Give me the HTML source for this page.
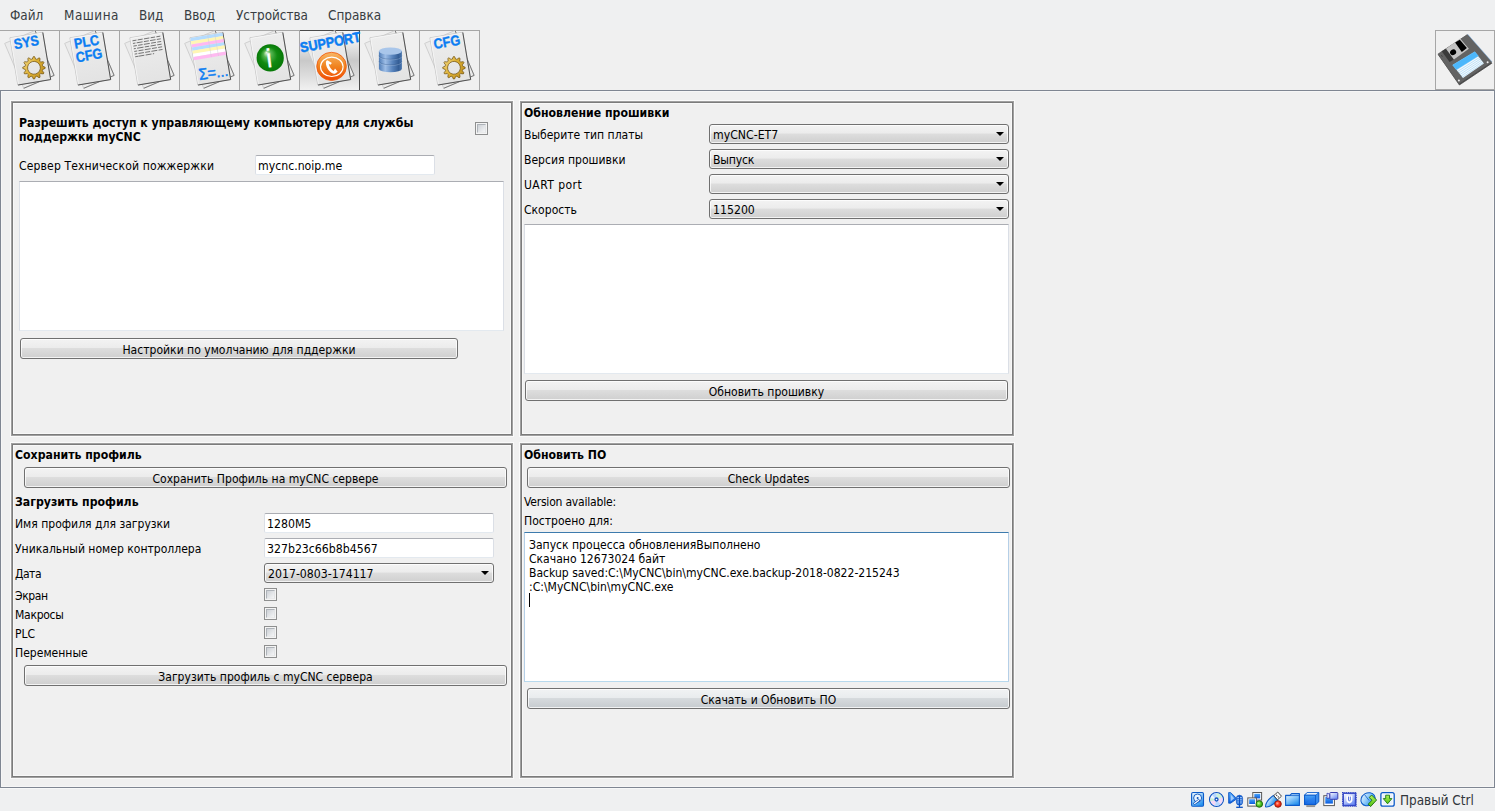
<!DOCTYPE html>
<html lang="ru">
<head>
<meta charset="utf-8">
<title>myCNC</title>
<style>
html,body{margin:0;padding:0;}
body{width:1495px;height:811px;overflow:hidden;background:#eff0f1;position:relative;
 font-family:"DejaVu Sans Condensed","DejaVu Sans","Liberation Sans",sans-serif;font-size:12.2px;color:#000;}
.abs{position:absolute;}
#menubar{position:absolute;left:0;top:0;width:1495px;height:30px;background:#eff0f1;}
#menubar span{position:absolute;top:7px;font-size:13.4px;line-height:18px;color:#383d42;white-space:nowrap;}
#vm{position:absolute;left:0;top:30px;width:1495px;height:758px;background:#f0f0f0;}
#frame{position:absolute;left:0;top:60px;width:1493px;height:696px;border:1px solid #7f8692;box-shadow:inset 1px 1px 0 #f6f6f6,inset -1px -1px 0 #f6f6f6;}
.tb{position:absolute;top:0;width:59px;height:60px;border-top:1px solid #a6a6a6;border-right:1px solid #a6a6a6;box-sizing:border-box;width:60px;}
.tb svg{position:absolute;left:0;top:-1px;}
.tb.sel{border-top:1px solid #4a4a4a;border-right:1px solid #4a4a4a;
 background:linear-gradient(#f6f6f6 0%,#eeeeee 18%,#c9c9c9 50%,#dcdcdc 75%,#f1f1f1 100%);}

.panel{position:absolute;border:1px solid #7c7c7c;box-sizing:border-box;box-shadow:0 0 0 1px #a0a0a0,0 0 0 2px #fafafa,inset 0 0 0 1px #f8f8f8;}
.t{position:absolute;white-space:nowrap;line-height:14px;height:14px;font-size:12.05px;}
.b{font-weight:bold;font-size:12.2px;}
.btn{position:absolute;box-sizing:border-box;font-size:12.05px;border:1px solid #707070;border-radius:3px;height:21px;
 background:linear-gradient(#f3f3f3 0%,#ececec 45%,#dddddd 50%,#cfcfcf 100%);
 box-shadow:inset 0 0 0 1px rgba(255,255,255,.75);text-align:center;line-height:22px;white-space:nowrap;}
.cmb{position:absolute;box-sizing:border-box;border:1px solid #707070;border-radius:3px;height:20px;
 background:linear-gradient(#f3f3f3 0%,#ececec 45%,#dddddd 50%,#cfcfcf 100%);
 box-shadow:inset 0 0 0 1px rgba(255,255,255,.75);line-height:20px;padding-left:3px;white-space:nowrap;}
.cmb:after{content:"";position:absolute;right:4px;top:7px;border-left:4px solid transparent;border-right:4px solid transparent;border-top:4px solid #000;}
.inp{position:absolute;box-sizing:border-box;border:1px solid #dbdfe6;border-top-color:#abadb3;border-bottom-color:#e3e9ef;border-radius:2px;background:#fff;height:20px;line-height:21px;padding-left:2px;white-space:nowrap;}
.ta{position:absolute;box-sizing:border-box;border:1px solid #dbdfe6;border-top-color:#abadb3;border-bottom-color:#e3e9ef;background:#fff;}
.cb{position:absolute;box-sizing:border-box;width:13px;height:13px;border:1px solid #8e8f8f;background:#f4f4f4;}
.cb:after{content:"";position:absolute;left:1px;top:1px;width:9px;height:9px;box-sizing:border-box;border:1px solid;border-color:#aeb3b9 #e2e4e6 #e9eaeb #aeb3b9;background:linear-gradient(135deg,#cdd1d6,#f4f5f6);}
#status{position:absolute;left:0;top:788px;width:1495px;height:23px;background:#eff0f1;border-top:1px solid #f7f8f8;box-sizing:border-box;}
</style>
</head>
<body>
<div id="menubar">
<span style="left:10px">Файл</span><span style="left:64px;letter-spacing:.5px">Машина</span><span style="left:139px">Вид</span><span style="left:184px">Ввод</span><span style="left:236px">Устройства</span><span style="left:328px">Справка</span>
</div>
<div id="vm">
<svg width="0" height="0" style="position:absolute"><defs>
<linearGradient id="pg" x1="0" y1="0" x2="0" y2="1"><stop offset="0" stop-color="#ededed"/><stop offset="1" stop-color="#e3e3e3"/></linearGradient>
<linearGradient id="gold" x1="0" y1="0" x2="1" y2="1"><stop offset="0" stop-color="#f7e096"/><stop offset=".45" stop-color="#ddb033"/><stop offset="1" stop-color="#b98a1e"/></linearGradient>
<radialGradient id="grn" cx=".5" cy=".5" r=".5" fx=".36" fy=".3"><stop offset="0" stop-color="#e6f7e2"/><stop offset=".28" stop-color="#55b34f"/><stop offset=".62" stop-color="#118a11"/><stop offset="1" stop-color="#077807"/></radialGradient>
<linearGradient id="org" x1="0" y1="0" x2="0" y2="1"><stop offset="0" stop-color="#f8b766"/><stop offset=".5" stop-color="#f0831f"/><stop offset="1" stop-color="#f04a02"/></linearGradient>
<linearGradient id="dbg" x1="0" y1="0" x2="1" y2="0"><stop offset="0" stop-color="#4f7cb6"/><stop offset=".28" stop-color="#9dbde6"/><stop offset=".6" stop-color="#5783bc"/><stop offset=".85" stop-color="#355f97"/><stop offset="1" stop-color="#4a76ae"/></linearGradient>
</defs></svg>
<div class="tb" style="left:0px"><svg width="60" height="60" viewBox="0 0 60 60" overflow="visible"><g transform="translate(29.4 29.4) rotate(-23)"><rect x="-16.5" y="-24.4" width="33" height="48.8" fill="#ebebeb" stroke="#c6c6c6" stroke-width=".7"/><path d="M16.5 -24.4V24.4H-16.5" fill="none" stroke="#6e6e6e" stroke-width=".8"/></g>
<g transform="translate(30.3 28.7) rotate(-9.5)"><rect x="-16.65" y="-23.95" width="33.3" height="47.9" fill="url(#pg)" stroke="#bcbcbc" stroke-width=".7"/><path d="M-15.95 23.5V-23.25H16.1" fill="none" stroke="#f8f8f8" stroke-width=".8"/><path d="M16.65 -23.8V23.95H-16.4" fill="none" stroke="#4c4c4c" stroke-width=".9"/></g><text transform="translate(14.8 19.2) rotate(-10) scale(0.97 1.1)" font-family="Liberation Sans, sans-serif" font-size="13" font-weight="bold" fill="#0b7df2" stroke="#0b7df2" stroke-width=".35">SYS</text><g transform="translate(33.95 37.8) rotate(-15)"><path d="M8.90 0.00 L8.88 0.65 L10.96 2.33 L10.65 3.46 L8.01 3.87 L7.71 4.45 L7.36 5.00 L8.32 7.49 L7.49 8.32 L5.00 7.36 L4.45 7.71 L3.87 8.01 L3.46 10.65 L2.33 10.96 L0.65 8.88 L0.00 8.90 L-0.65 8.88 L-2.33 10.96 L-3.46 10.65 L-3.87 8.01 L-4.45 7.71 L-5.00 7.36 L-7.49 8.32 L-8.32 7.49 L-7.36 5.00 L-7.71 4.45 L-8.01 3.87 L-10.65 3.46 L-10.96 2.33 L-8.88 0.65 L-8.90 0.00 L-8.88 -0.65 L-10.96 -2.33 L-10.65 -3.46 L-8.01 -3.87 L-7.71 -4.45 L-7.36 -5.00 L-8.32 -7.49 L-7.49 -8.32 L-5.00 -7.36 L-4.45 -7.71 L-3.87 -8.01 L-3.46 -10.65 L-2.33 -10.96 L-0.65 -8.88 L-0.00 -8.90 L0.65 -8.88 L2.33 -10.96 L3.46 -10.65 L3.87 -8.01 L4.45 -7.71 L5.00 -7.36 L7.49 -8.32 L8.32 -7.49 L7.36 -5.00 L7.71 -4.45 L8.01 -3.87 L10.65 -3.46 L10.96 -2.33 L8.88 -0.65Z M6.4 0A6.4 6.4 0 1 0 -6.4 0A6.4 6.4 0 1 0 6.4 0Z" fill="url(#gold)" fill-rule="evenodd" stroke="#6e4f0e" stroke-width=".65" stroke-linejoin="round"/></g></svg></div>
<div class="tb" style="left:60px"><svg width="60" height="60" viewBox="0 0 60 60" overflow="visible"><g transform="translate(29.4 29.4) rotate(-23)"><rect x="-16.5" y="-24.4" width="33" height="48.8" fill="#ebebeb" stroke="#c6c6c6" stroke-width=".7"/><path d="M16.5 -24.4V24.4H-16.5" fill="none" stroke="#6e6e6e" stroke-width=".8"/></g>
<g transform="translate(30.3 28.7) rotate(-9.5)"><rect x="-16.65" y="-23.95" width="33.3" height="47.9" fill="url(#pg)" stroke="#bcbcbc" stroke-width=".7"/><path d="M-15.95 23.5V-23.25H16.1" fill="none" stroke="#f8f8f8" stroke-width=".8"/><path d="M16.65 -23.8V23.95H-16.4" fill="none" stroke="#4c4c4c" stroke-width=".9"/></g><text transform="translate(15.0 18.7) rotate(-10) scale(0.97 1.1)" font-family="Liberation Sans, sans-serif" font-size="13" font-weight="bold" fill="#0b7df2" stroke="#0b7df2" stroke-width=".35">PLC</text><text transform="translate(16.8 32.4) rotate(-10) scale(0.97 1.1)" font-family="Liberation Sans, sans-serif" font-size="13" font-weight="bold" fill="#0b7df2" stroke="#0b7df2" stroke-width=".35">CFG</text></svg></div>
<div class="tb" style="left:120px"><svg width="60" height="60" viewBox="0 0 60 60" overflow="visible"><g transform="translate(29.4 29.4) rotate(-23)"><rect x="-16.5" y="-24.4" width="33" height="48.8" fill="#ebebeb" stroke="#c6c6c6" stroke-width=".7"/><path d="M16.5 -24.4V24.4H-16.5" fill="none" stroke="#6e6e6e" stroke-width=".8"/></g>
<g transform="translate(30.3 28.7) rotate(-9.5)"><rect x="-16.65" y="-23.95" width="33.3" height="47.9" fill="url(#pg)" stroke="#bcbcbc" stroke-width=".7"/><path d="M-15.95 23.5V-23.25H16.1" fill="none" stroke="#f8f8f8" stroke-width=".8"/><path d="M16.65 -23.8V23.95H-16.4" fill="none" stroke="#4c4c4c" stroke-width=".9"/><path d="M-14.6 -20.60H13.6" stroke="#4a4a4a" stroke-width=".7" stroke-dasharray="4 1.3 5 1.3 5.5 1.3 4.5 1.3 5" fill="none"/><path d="M-14.6 -17.90H13.6" stroke="#4a4a4a" stroke-width=".7" stroke-dasharray="2.5 1.3 6 1.3 5 1.3 5.5 1.3 5" fill="none"/><path d="M-14.6 -15.20H13.6" stroke="#4a4a4a" stroke-width=".7" stroke-dasharray="3.5 1.3 4.5 1.3 6 1.3 5 1.3 5" fill="none"/><path d="M-14.6 -12.50H13.6" stroke="#4a4a4a" stroke-width=".7" stroke-dasharray="2 1.3 6.5 1.3 4.5 1.3 5.5 1.3 6" fill="none"/><path d="M-14.6 -9.80H13.6" stroke="#4a4a4a" stroke-width=".7" stroke-dasharray="3 1.3 5 1.3 6 1.3 5 1.3 5.5" fill="none"/><path d="M-14.6 -7.10H13.6" stroke="#4a4a4a" stroke-width=".7" stroke-dasharray="2.5 1.3 5.5 1.3 5 1.3 6 1.3 5" fill="none"/><path d="M-14.6 -4.40H13.6" stroke="#4a4a4a" stroke-width=".7" stroke-dasharray="3.5 1.3 0 30" fill="none"/><path d="M-10.8 -4.4H4.6" stroke="#4a4a4a" stroke-width=".7" stroke-dasharray="5.5 1.3 6 1.3 4 30" fill="none"/></g></svg></div>
<div class="tb" style="left:180px"><svg width="60" height="60" viewBox="0 0 60 60" overflow="visible"><g transform="translate(29.4 29.4) rotate(-23)"><rect x="-16.5" y="-24.4" width="33" height="48.8" fill="#ebebeb" stroke="#c6c6c6" stroke-width=".7"/><path d="M16.5 -24.4V24.4H-16.5" fill="none" stroke="#6e6e6e" stroke-width=".8"/></g>
<g transform="translate(30.3 28.7) rotate(-9.5)"><rect x="-16.65" y="-23.95" width="33.3" height="47.9" fill="url(#pg)" stroke="#bcbcbc" stroke-width=".7"/><path d="M-15.95 23.5V-23.25H16.1" fill="none" stroke="#f8f8f8" stroke-width=".8"/><path d="M16.65 -23.8V23.95H-16.4" fill="none" stroke="#4c4c4c" stroke-width=".9"/><rect x="-16.3" y="-23.60" width="32.6" height="3.24" fill="#b4dcff"/><rect x="-16.3" y="-20.41" width="32.6" height="3.24" fill="#fff6b4"/><rect x="-16.3" y="-17.22" width="32.6" height="3.24" fill="#ffb9f1"/><rect x="-16.3" y="-14.03" width="32.6" height="3.24" fill="#b4dcff"/><rect x="-16.3" y="-10.84" width="32.6" height="3.24" fill="#fff6b4"/><rect x="-16.3" y="-7.65" width="32.6" height="3.24" fill="#ffffff"/><rect x="-16.3" y="-4.46" width="32.6" height="3.24" fill="#ffb9f1"/><path d="M1.3 -23.6V-1.3M8.5 -23.6V-1.3" stroke="#c9c9d2" stroke-width=".5" fill="none" opacity=".8"/></g><text transform="translate(19.4 49.9) rotate(-8) scale(1.0 1.1)" font-family="Liberation Sans, sans-serif" font-size="14.5" font-weight="normal" fill="#0b7df2" stroke="#0b7df2" stroke-width=".45">Σ=...</text></svg></div>
<div class="tb" style="left:240px"><svg width="60" height="60" viewBox="0 0 60 60" overflow="visible"><g transform="translate(29.4 29.4) rotate(-23)"><rect x="-16.5" y="-24.4" width="33" height="48.8" fill="#ebebeb" stroke="#c6c6c6" stroke-width=".7"/><path d="M16.5 -24.4V24.4H-16.5" fill="none" stroke="#6e6e6e" stroke-width=".8"/></g>
<g transform="translate(30.3 28.7) rotate(-9.5)"><rect x="-16.65" y="-23.95" width="33.3" height="47.9" fill="url(#pg)" stroke="#bcbcbc" stroke-width=".7"/><path d="M-15.95 23.5V-23.25H16.1" fill="none" stroke="#f8f8f8" stroke-width=".8"/><path d="M16.65 -23.8V23.95H-16.4" fill="none" stroke="#4c4c4c" stroke-width=".9"/></g><circle cx="30.2" cy="27.9" r="13.6" fill="url(#grn)"/><text transform="translate(27.3 37.6) rotate(-7)" font-family="Liberation Sans, sans-serif" font-size="26" fill="#fff" stroke="#fff" stroke-width=".3">i</text></svg></div>
<div class="tb sel" style="left:300px"><svg width="60" height="60" viewBox="0 0 60 60" overflow="visible"><g transform="translate(29.4 29.4) rotate(-23)"><rect x="-16.5" y="-24.4" width="33" height="48.8" fill="#ebebeb" stroke="#c6c6c6" stroke-width=".7"/><path d="M16.5 -24.4V24.4H-16.5" fill="none" stroke="#6e6e6e" stroke-width=".8"/></g>
<g transform="translate(30.3 28.7) rotate(-9.5)"><rect x="-16.65" y="-23.95" width="33.3" height="47.9" fill="url(#pg)" stroke="#bcbcbc" stroke-width=".7"/><path d="M-15.95 23.5V-23.25H16.1" fill="none" stroke="#f8f8f8" stroke-width=".8"/><path d="M16.65 -23.8V23.95H-16.4" fill="none" stroke="#4c4c4c" stroke-width=".9"/></g><ellipse cx="31.55" cy="36.4" rx="14.8" ry="14.1" fill="url(#org)" stroke="#f2560a" stroke-width=".8"/><ellipse cx="31.8" cy="36.85" rx="11.3" ry="9.7" fill="none" stroke="#fff" stroke-width="1.1"/><path d="M27.5 30.3L31.9 32.9L30.4 34.7L28.7 33.7C29.2 37 31.2 39.6 33.7 41L35 38.6L37.7 41.7L35.3 43.5C33.5 44.2 31.5 43.2 29.6 41.2C27.3 38.7 25.6 35 25.9 32.4C26 31.2 26.8 30.3 27.5 30.3Z" fill="#fff"/><text transform="translate(1.1 22.6) rotate(-10.5) scale(0.975 1.08)" font-family="Liberation Sans, sans-serif" font-size="13" font-weight="bold" fill="#0b7df2" stroke="#0b7df2" stroke-width=".5">SUPPORT</text></svg></div>
<div class="tb" style="left:360px"><svg width="60" height="60" viewBox="0 0 60 60" overflow="visible"><g transform="translate(29.4 29.4) rotate(-23)"><rect x="-16.5" y="-24.4" width="33" height="48.8" fill="#ebebeb" stroke="#c6c6c6" stroke-width=".7"/><path d="M16.5 -24.4V24.4H-16.5" fill="none" stroke="#6e6e6e" stroke-width=".8"/></g>
<g transform="translate(30.3 28.7) rotate(-9.5)"><rect x="-16.65" y="-23.95" width="33.3" height="47.9" fill="url(#pg)" stroke="#bcbcbc" stroke-width=".7"/><path d="M-15.95 23.5V-23.25H16.1" fill="none" stroke="#f8f8f8" stroke-width=".8"/><path d="M16.65 -23.8V23.95H-16.4" fill="none" stroke="#4c4c4c" stroke-width=".9"/></g><path d="M18.9 21.1V38.7A11.5 3.6 0 0 0 41.9 38.7V21.1Z" fill="url(#dbg)"/><path d="M18.9 26.3A11.5 3.6 0 0 0 41.9 26.3M18.9 31.9A11.5 3.6 0 0 0 41.9 31.9" fill="none" stroke="#c4d8f0" stroke-width=".6" opacity=".55"/><path d="M18.9 25.6A11.5 3.6 0 0 0 41.9 25.6M18.9 31.2A11.5 3.6 0 0 0 41.9 31.2" fill="none" stroke="#2f5486" stroke-width=".6" opacity=".6"/><ellipse cx="30.4" cy="21.1" rx="11.5" ry="3.6" fill="#a9c6ea"/></svg></div>
<div class="tb" style="left:420px"><svg width="60" height="60" viewBox="0 0 60 60" overflow="visible"><g transform="translate(29.4 29.4) rotate(-23)"><rect x="-16.5" y="-24.4" width="33" height="48.8" fill="#ebebeb" stroke="#c6c6c6" stroke-width=".7"/><path d="M16.5 -24.4V24.4H-16.5" fill="none" stroke="#6e6e6e" stroke-width=".8"/></g>
<g transform="translate(30.3 28.7) rotate(-9.5)"><rect x="-16.65" y="-23.95" width="33.3" height="47.9" fill="url(#pg)" stroke="#bcbcbc" stroke-width=".7"/><path d="M-15.95 23.5V-23.25H16.1" fill="none" stroke="#f8f8f8" stroke-width=".8"/><path d="M16.65 -23.8V23.95H-16.4" fill="none" stroke="#4c4c4c" stroke-width=".9"/></g><text transform="translate(14.6 19.1) rotate(-10) scale(0.97 1.1)" font-family="Liberation Sans, sans-serif" font-size="13" font-weight="bold" fill="#0b7df2" stroke="#0b7df2" stroke-width=".35">CFG</text><g transform="translate(33.95 37.8) rotate(-15)"><path d="M8.90 0.00 L8.88 0.65 L10.96 2.33 L10.65 3.46 L8.01 3.87 L7.71 4.45 L7.36 5.00 L8.32 7.49 L7.49 8.32 L5.00 7.36 L4.45 7.71 L3.87 8.01 L3.46 10.65 L2.33 10.96 L0.65 8.88 L0.00 8.90 L-0.65 8.88 L-2.33 10.96 L-3.46 10.65 L-3.87 8.01 L-4.45 7.71 L-5.00 7.36 L-7.49 8.32 L-8.32 7.49 L-7.36 5.00 L-7.71 4.45 L-8.01 3.87 L-10.65 3.46 L-10.96 2.33 L-8.88 0.65 L-8.90 0.00 L-8.88 -0.65 L-10.96 -2.33 L-10.65 -3.46 L-8.01 -3.87 L-7.71 -4.45 L-7.36 -5.00 L-8.32 -7.49 L-7.49 -8.32 L-5.00 -7.36 L-4.45 -7.71 L-3.87 -8.01 L-3.46 -10.65 L-2.33 -10.96 L-0.65 -8.88 L-0.00 -8.90 L0.65 -8.88 L2.33 -10.96 L3.46 -10.65 L3.87 -8.01 L4.45 -7.71 L5.00 -7.36 L7.49 -8.32 L8.32 -7.49 L7.36 -5.00 L7.71 -4.45 L8.01 -3.87 L10.65 -3.46 L10.96 -2.33 L8.88 -0.65Z M6.4 0A6.4 6.4 0 1 0 -6.4 0A6.4 6.4 0 1 0 6.4 0Z" fill="url(#gold)" fill-rule="evenodd" stroke="#6e4f0e" stroke-width=".65" stroke-linejoin="round"/></g></svg></div>

<div id="frame"></div>

<!-- top-left panel -->
<div class="panel" style="left:12px;top:72px;width:500px;height:333px"></div>
<div class="t b" style="left:19px;top:86px">Разрешить доступ к управляющему компьютеру для службы</div>
<div class="t b" style="left:19px;top:100px">поддержки myCNC</div>
<div class="cb" style="left:475px;top:92px"></div>
<div class="t" style="left:19px;top:129px;letter-spacing:.14px">Сервер Технической пожжержки</div>
<div class="inp" style="left:255px;top:125px;width:180px">mycnc.noip.me</div>
<div class="ta" style="left:19px;top:151px;width:485px;height:150px"></div>
<div class="btn" style="left:20px;top:308px;width:438px">Настройки по умолчанию для пддержки</div>

<!-- top-right panel -->
<div class="panel" style="left:521px;top:72px;width:492px;height:333px"></div>
<div class="t b" style="left:524px;top:76px">Обновление прошивки</div>
<div class="t" style="left:524px;top:98px">Выберите тип платы</div>
<div class="cmb" style="left:709px;top:94px;width:300px">myCNC-ET7</div>
<div class="t" style="left:524px;top:123px">Версия прошивки</div>
<div class="cmb" style="left:709px;top:119px;width:300px;letter-spacing:-0.2px">Выпуск</div>
<div class="t" style="left:524px;top:148px;letter-spacing:0.42px">UART port</div>
<div class="cmb" style="left:709px;top:144px;width:300px"></div>
<div class="t" style="left:524px;top:173px">Скорость</div>
<div class="cmb" style="left:709px;top:169px;width:300px">115200</div>
<div class="ta" style="left:524px;top:194px;width:485px;height:150px"></div>
<div class="btn" style="left:525px;top:350px;width:483px">Обновить прошивку</div>

<!-- bottom-left panel -->
<div class="panel" style="left:12px;top:414px;width:500px;height:333px"></div>
<div class="t b" style="left:15px;top:418px">Сохранить профиль</div>
<div class="btn" style="left:24px;top:437px;width:483px">Сохранить Профиль на myCNC сервере</div>
<div class="t b" style="left:15px;top:465px">Загрузить профиль</div>
<div class="t" style="left:15px;top:487px">Имя профиля для загрузки</div>
<div class="inp" style="left:264px;top:483px;width:230px">1280M5</div>
<div class="t" style="left:15px;top:512px">Уникальный номер контроллера</div>
<div class="inp" style="left:264px;top:508px;width:230px">327b23c66b8b4567</div>
<div class="t" style="left:15px;top:537px;letter-spacing:-0.5px">Дата</div>
<div class="cmb" style="left:264px;top:533px;width:230px;height:20px">2017-0803-174117</div>
<div class="t" style="left:15px;top:559px;letter-spacing:-0.4px">Экран</div>
<div class="cb" style="left:264px;top:558px"></div>
<div class="t" style="left:15px;top:578px;letter-spacing:-0.3px">Макросы</div>
<div class="cb" style="left:264px;top:577px"></div>
<div class="t" style="left:15px;top:597px">PLC</div>
<div class="cb" style="left:264px;top:596px"></div>
<div class="t" style="left:15px;top:616px">Переменные</div>
<div class="cb" style="left:264px;top:615px"></div>
<div class="btn" style="left:24px;top:635px;width:483px">Загрузить профиль с myCNC сервера</div>

<!-- bottom-right panel -->
<div class="panel" style="left:521px;top:414px;width:492px;height:333px"></div>
<div class="t b" style="left:524px;top:418px">Обновить ПО</div>
<div class="btn" style="left:527px;top:437px;width:483px">Check Updates</div>
<div class="t" style="left:524px;top:465px;letter-spacing:-0.22px">Version available:</div>
<div class="t" style="left:524px;top:484px">Построено для:</div>
<div class="ta" style="left:524px;top:502px;width:485px;height:150px;border-color:#3d7bad #b5cfe7 #b7d9ed #b5cfe7"></div>
<div class="t" style="left:529px;top:508px">Запуск процесса обновленияВыполнено</div>
<div class="t" style="left:529px;top:522px">Скачано 12673024 байт</div>
<div class="t" style="left:529px;top:536px">Backup saved:C:\MyCNC\bin\myCNC.exe.backup-2018-0822-215243</div>
<div class="t" style="left:529px;top:550px">:C:\MyCNC\bin\myCNC.exe</div>
<div class="abs" style="left:529px;top:563px;width:1px;height:14px;background:#000"></div>
<div class="btn" style="left:527px;top:658px;width:483px;background:linear-gradient(#f1f3f4 0%,#e9ecee 45%,#d6dadd 50%,#c6cbcf 100%)">Скачать и Обновить ПО</div>

<!-- save button -->
<div class="abs" id="savebtn" style="left:1435px;top:0;width:60px;height:60px;box-sizing:border-box;border:1px solid #a6a6a6"><svg width="60" height="60" viewBox="0 0 60 60" style="position:absolute;left:-1px;top:-1px">
<path d="M32.3 4.9L3.1 24.4L24.4 55.0L56.9 33.2Z" fill="#454545" stroke="#454545" stroke-width=".7" stroke-linejoin="round"/>
<path d="M32.3 4.7L3.2 23.9L24.0 53.6L56.5 32.0Z" fill="#636363" stroke="#636363" stroke-width=".7" stroke-linejoin="round"/>
<path d="M32.6 4.2L56.9 31.8" stroke="#5b8fc4" stroke-width=".7" fill="none" opacity=".8"/>
<path d="M6.7 21.3L11.0 18.7L18.9 29.5L14.6 31.9Z" fill="#3a3a3a"/>
<path d="M11.0 18.7L25.2 8.6L33.9 18.7L18.9 29.5Z" fill="#c4c4c4"/>
<path d="M20.1 12.6L24.8 9.8L31.9 18.1L26.8 22.1Z" fill="#000"/>
<ellipse cx="18.1" cy="22.3" rx="3.1" ry="2.8" transform="rotate(-34 18.1 22.3)" fill="#000"/>
<path d="M17.7 35.1L39.8 21.7L48.9 33.5L28.0 48.1Z" fill="#f4f8fb"/>
<path d="M17.7 35.1L39.8 21.7L43.3 26.0L21.3 39.8Z" fill="#4cb7fb" stroke="#4cb7fb" stroke-width=".5" stroke-linejoin="round"/>
<path d="M22.6 41.5L44.4 27.5M23.8 43.0L45.5 28.9M25.0 44.5L46.5 30.3M26.1 46.0L47.6 31.7M27.2 47.4L48.5 33.0" stroke="#7cc8f7" stroke-width=".45" fill="none"/>
<circle cx="52.6" cy="32.3" r="1" fill="#eee"/><circle cx="23.9" cy="50.4" r="1" fill="#eee"/>
<path d="M6.5 25.3L7.3 26.6" stroke="#3c3c3c" stroke-width="1" fill="none"/>
</svg></div>
</div>
<div id="status">
<svg width="230" height="23" viewBox="0 0 230 23" style="position:absolute;left:1186px;top:-1px">
<defs>
<linearGradient id="sb" x1="0" y1="0" x2=".6" y2="1"><stop offset="0" stop-color="#f4faff"/><stop offset=".45" stop-color="#9ed2fb"/><stop offset="1" stop-color="#2a93ee"/></linearGradient>
<linearGradient id="sb2" x1="0" y1="0" x2="0" y2="1"><stop offset="0" stop-color="#4aa4f6"/><stop offset="1" stop-color="#0a5ce0"/></linearGradient>
<radialGradient id="sgr" cx=".4" cy=".4" r=".6"><stop offset="0" stop-color="#c8ff9a"/><stop offset=".5" stop-color="#5ccc2a"/><stop offset="1" stop-color="#2d9a10"/></radialGradient>
<radialGradient id="srd" cx=".4" cy=".4" r=".6"><stop offset="0" stop-color="#ffb0a0"/><stop offset=".5" stop-color="#ff3a20"/><stop offset="1" stop-color="#d81808"/></radialGradient>
<linearGradient id="spu" x1="0" y1="0" x2=".7" y2="1"><stop offset="0" stop-color="#ffffff"/><stop offset="1" stop-color="#6c8cf4"/></linearGradient>
<linearGradient id="sgn" x1="0" y1="0" x2="0" y2="1"><stop offset="0" stop-color="#b4f25a"/><stop offset="1" stop-color="#4cc010"/></linearGradient>
</defs>
<!-- hdd -->
<rect x="5.6" y="4.5" width="11.9" height="13.8" rx="1.4" fill="url(#sb)" stroke="#0b5ac9" stroke-width="1.1"/>
<circle cx="11.6" cy="10" r="4" fill="#eaf5ff" stroke="#0b50b8" stroke-width=".9"/>
<circle cx="11.6" cy="10" r="1" fill="#0b50b8"/>
<path d="M12.6 12.6L8.6 15.5" stroke="#0b50b8" stroke-width="2.6" stroke-linecap="round"/><path d="M12.6 12.6L8.6 15.5" stroke="#fff" stroke-width="1.2" stroke-linecap="round"/>
<!-- cd -->
<circle cx="30.5" cy="11.5" r="7" fill="#eef6ff" stroke="#0b50c0" stroke-width="1.1"/>
<path d="M30.5 5.3A6.2 6.2 0 0 1 36.3 9.5L32.5 10.8A2.2 2.2 0 0 0 30.5 9.3Z" fill="#b8f0c0" opacity=".6"/>
<path d="M36.3 9.5A6.2 6.2 0 0 1 34.5 16.2L31.9 13.2A2.2 2.2 0 0 0 32.5 10.8Z" fill="#f8c8f0" opacity=".6"/>
<path d="M24.6 13.3A6.2 6.2 0 0 0 29 17.5L30 13.6A2.2 2.2 0 0 1 28.4 12.2Z" fill="#f8c8f0" opacity=".7"/>
<path d="M24.5 10A6.2 6.2 0 0 0 24.6 13.3L28.4 12.2A2.2 2.2 0 0 1 28.4 10.9Z" fill="#b8f0c0" opacity=".7"/>
<path d="M26 7A6.2 6.2 0 0 1 30.5 5.3V9.3A2.2 2.2 0 0 0 28.9 10Z" fill="#a8d0ff" opacity=".8"/>
<path d="M34.5 16.2A6.2 6.2 0 0 1 29 17.5L30 13.6A2.2 2.2 0 0 0 31.9 13.2Z" fill="#a8d0ff" opacity=".8"/>
<circle cx="30.5" cy="11.5" r="1.5" fill="#fff" stroke="#0b50c0" stroke-width="1.3"/>
<!-- audio -->
<path d="M42.6 4.6H44.6L49.8 9.6V11.6L44.6 15.2H42.6Z" fill="url(#sb2)" stroke="#0b50c0" stroke-width=".8" stroke-linejoin="round"/>
<path d="M44.6 6.3L48.2 10.3L44.6 13.6Z" fill="#bfe0ff" opacity=".8"/>
<rect x="50.4" y="7.2" width="6.2" height="10" rx="3" fill="#1a66d8" stroke="#0b50c0" stroke-width=".6"/>
<path d="M51.3 9.5H55.8M51.3 11.3H55.8M51.3 13.1H55.8M51.3 14.9H55.8" stroke="#d8ecff" stroke-width=".7"/>
<path d="M53.5 7.5V19" stroke="#0b50c0" stroke-width="1.1"/>
<path d="M50.2 19.3H56.8" stroke="#0b50c0" stroke-width="1.3"/>
<!-- net -->
<rect x="66.8" y="4.5" width="8.8" height="7.6" fill="#fff" stroke="#585858" stroke-width="1"/><rect x="68.3" y="5.8" width="5.9" height="4.6" fill="url(#sb2)"/>
<rect x="61.8" y="9.9" width="8.6" height="8.2" fill="#fff" stroke="#585858" stroke-width="1"/><rect x="63.2" y="11.2" width="5.8" height="4.8" fill="url(#sb2)"/>
<circle cx="73.3" cy="16" r="3.3" fill="url(#sgr)" stroke="#1c6a10" stroke-width=".9"/>
<!-- usb -->
<g transform="translate(86.2 12.8) rotate(-42)"><path d="M-9 0C-6 -3.6 0 -3.6 4.6 -3.2V3.2C0 3.6 -6 3.6 -9 0Z" fill="url(#sb)" stroke="#0b5ac9" stroke-width="1"/><rect x="4.6" y="-2.8" width="5.4" height="5.6" fill="#fff" stroke="#444" stroke-width=".9"/><rect x="6.4" y="-1.7" width="1.3" height="1.2" fill="#444"/><rect x="6.4" y=".6" width="1.3" height="1.2" fill="#444"/></g>
<circle cx="92" cy="16" r="3.3" fill="url(#srd)" stroke="#8c1c0c" stroke-width=".9"/>
<!-- folder -->
<path d="M99.6 17.4V7.4H104L105.6 5.6H113.4V17.4Z" fill="url(#sb)" stroke="#0b5ac9" stroke-width="1.1" stroke-linejoin="round"/>
<path d="M100 7.6H113.2" stroke="#0b5ac9" stroke-width=".8"/>
<!-- display -->
<path d="M118.6 7.2L121.2 4.5H132.8V13.8L129.6 16.6H118.6Z" fill="#3a8ff0" stroke="#0b5ac9" stroke-width="1" stroke-linejoin="round"/>
<path d="M118.6 7.2L121.2 4.5H132.8L129.6 7.2Z" fill="#e8f4ff" stroke="#0b5ac9" stroke-width=".7" stroke-linejoin="round"/>
<rect x="118.6" y="7.2" width="11" height="9.4" fill="url(#sb2)" stroke="#0b5ac9" stroke-width=".9"/>
<path d="M119.4 15.8L128.8 8V15.8Z" fill="#2a80f0" opacity=".5"/>
<path d="M120.6 17.6H128.8V18.6H120.6Z" fill="#888" stroke="#666" stroke-width=".4"/>
<!-- rec -->
<rect x="137.8" y="7.7" width="10.6" height="9.9" fill="#fff" stroke="#585858" stroke-width="1"/><rect x="139.3" y="9" width="7.6" height="6.6" fill="url(#sb2)"/>
<rect x="143.8" y="4.5" width="8" height="6.8" rx=".8" fill="url(#spu)" stroke="#3a3fb0" stroke-width="1"/>
<path d="M143.6 6L141 5.2V10.6L143.6 9.8Z" fill="#dfe6ff" stroke="#3a3fb0" stroke-width=".8" stroke-linejoin="round"/>
<!-- cpu -->
<rect x="156.6" y="4.6" width="13.6" height="13.6" fill="#2f43c4" stroke="#2f43c4" stroke-width="1.2" stroke-dasharray=".9 .9"/>
<rect x="157.6" y="5.6" width="11.6" height="11.6" fill="url(#spu)" stroke="#2f43c4" stroke-width=".8"/>
<path d="M160.4 7.6H166.4V12.2C166.4 14 164.6 15 163.4 15.6C162.2 15 160.4 14 160.4 12.2Z" fill="#fff"/>
<path d="M162.5 8.6V12L163.4 13.2L164.3 12V8.6" fill="none" stroke="#5a74e0" stroke-width="1"/>
<!-- mouse -->
<ellipse cx="182" cy="11.2" rx="7.4" ry="6.2" transform="rotate(-32 182 11.2)" fill="url(#sb)" stroke="#0b5ac9" stroke-width="1"/>
<path d="M178.6 6.6L183 12.4" stroke="#0b5ac9" stroke-width=".8"/>
<path d="M183.2 9.6L185.6 7L190.6 12L184.6 18.6L182.2 16.2L186 12.2Z" fill="url(#sgn)" stroke="#1c6a10" stroke-width=".9" stroke-linejoin="round"/>
<!-- kbd -->
<rect x="194.9" y="4.6" width="13.3" height="13.6" rx="2" fill="#fff" stroke="#0b5ac9" stroke-width="1.3"/>
<rect x="196.6" y="6.3" width="9.9" height="10.2" fill="#dfe9f8" opacity=".7"/>
<path d="M199.7 7.2H203.5V10.6H205.9L201.6 15.8L197.3 10.6H199.7Z" fill="url(#sgn)" stroke="#1c7a10" stroke-width=".9" stroke-linejoin="round"/>
</svg>
<span class="abs" style="left:1400px;top:3px;font-size:13.4px;line-height:18px;color:#31363b;white-space:nowrap">Правый Ctrl</span>
</div>
</body>
</html>
